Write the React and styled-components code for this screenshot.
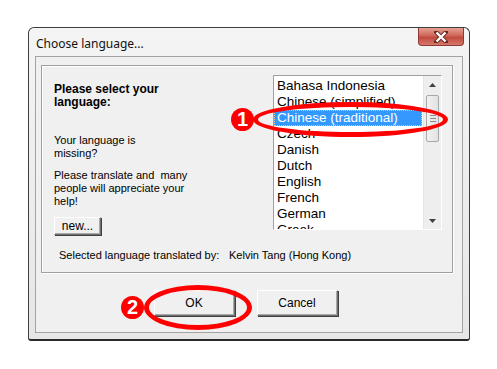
import React from 'react';
import styled, { createGlobalStyle } from 'styled-components';

const GlobalStyle = createGlobalStyle`
  html, body {
    margin: 0;
    padding: 0;
    background: #ffffff;
  }
  body {
    font-family: "Liberation Sans", Arial, sans-serif;
  }
`;

const Page = styled.div`
  width: 497px;
  height: 369px;
  padding: 27px 0 0 28px;
  box-sizing: border-box;
`;

const Window = styled.div`
  position: relative;
  width: 442px;
  height: 314px;
  box-sizing: border-box;
  border: 1px solid #3e3e3e;
  border-bottom: 2px solid #2a2a2a;
  border-radius: 6px 6px 3px 3px;
  background: linear-gradient(180deg, #f4f4f4 0%, #ececec 60%, #e6e6e6 100%);
  display: flex;
  flex-direction: column;
  padding: 0 6px 6px 6px;
`;

const TitleBar = styled.div`
  height: 28px;
  display: flex;
  align-items: flex-start;
  justify-content: space-between;
`;

const Title = styled.span`
  font-family: "Noto Sans", "Liberation Sans", sans-serif;
  font-size: 12px;
  color: #111;
  margin-top: 7px;
  padding-left: 1px;
`;

const CloseButton = styled.div`
  width: 46px;
  height: 18px;
  margin-right: -1px;
  box-sizing: border-box;
  border: 1px solid #8c3a32;
  border-top: none;
  border-radius: 0 0 4px 4px;
  background: linear-gradient(180deg, #e5a293 0%, #d0665a 45%, #c04a3e 55%, #d8786a 100%);
  display: flex;
  align-items: center;
  justify-content: center;
`;

const ClientArea = styled.div`
  flex: 1;
  border: 1px solid #a3a3a3;
  background: #f0f0f0;
  display: flex;
  flex-direction: column;
  padding: 8px 9px 0 5px;
`;

const GroupBox = styled.div`
  border: 1px solid #a0a0a0;
  box-shadow: inset 1px 1px 0 #ffffff, 1px 1px 0 #ffffff;
  padding: 9px 10px 10px 12px;
  display: flex;
  flex-direction: column;
`;

const TopRow = styled.div`
  display: flex;
  justify-content: space-between;
`;

const LeftColumn = styled.div`
  display: flex;
  flex-direction: column;
  padding-top: 8px;
  font-size: 11px;
  line-height: 13px;
  color: #000;
`;

const Heading = styled.div`
  font-weight: bold;
  font-size: 12px;
  line-height: 13px;
  margin-bottom: 25px;
`;

const Paragraph = styled.p`
  margin: 0 0 9px 0;
`;

const ClassicButton = styled.button`
  font-family: "Liberation Sans", Arial, sans-serif;
  font-size: 12px;
  color: #000;
  width: ${(p) => p.$width}px;
  height: ${(p) => p.$height}px;
  padding: 0;
  background: #f0f0f0;
  border: 1px solid;
  border-color: #ffffff #6f6f6f #6f6f6f #ffffff;
  box-shadow: inset -1px -1px 0 #a8a8a8, 1px 1px 0 #404040;
  cursor: default;
`;

const ListWrap = styled.div`
  width: 169px;
  height: 155px;
  box-sizing: border-box;
  border: 1px solid;
  border-color: #a0a0a0 #ffffff #ffffff #a0a0a0;
  background: #ffffff;
  display: flex;
`;

const ListItems = styled.div`
  flex: 1;
  overflow: hidden;
  padding: 2px 1px 0 0;
`;

const ListItem = styled.div`
  height: 16px;
  line-height: 16px;
  font-size: 13.5px;
  padding-left: 3px;
  white-space: nowrap;
  color: ${(p) => (p.$selected ? '#ffffff' : '#000')};
  background: ${(p) => (p.$selected ? '#3399ff' : 'transparent')};
  outline: ${(p) => (p.$selected ? '1px dotted #f5c27a' : 'none')};
  outline-offset: -1px;
`;

const ScrollBar = styled.div`
  width: 17px;
  background: #eeeeee;
  border-left: 1px solid #e4e4e4;
  display: flex;
  flex-direction: column;
  align-items: center;
`;

const Arrow = styled.div`
  width: 17px;
  height: 17px;
  display: flex;
  align-items: center;
  justify-content: center;
`;

const Track = styled.div`
  flex: 1;
  width: 100%;
  display: flex;
  flex-direction: column;
  align-items: center;
`;

const Thumb = styled.div`
  margin-top: 2px;
  width: 13px;
  height: 47px;
  box-sizing: border-box;
  border: 1px solid #a8a8a8;
  border-radius: 2px;
  background: linear-gradient(90deg, #f2f2f2, #e2e2e2);
  display: flex;
  flex-direction: column;
  align-items: center;
  justify-content: center;
  gap: 2px;
`;

const Grip = styled.div`
  width: 6px;
  height: 1px;
  background: #8a8a8a;
`;

const Footer = styled.div`
  display: flex;
  margin-top: 14px;
  padding-left: 5px;
  font-size: 11px;
  line-height: 13px;
  color: #000;
`;

const FooterLabel = styled.span`
  width: 170px;
`;

const ButtonRow = styled.div`
  display: flex;
  justify-content: center;
  gap: 22px;
  padding-top: 17px;
  padding-right: 3px;
`;

const Ellipse = styled.div`
  position: absolute;
  left: ${(p) => p.$x}px;
  top: ${(p) => p.$y}px;
  width: ${(p) => p.$w}px;
  height: ${(p) => p.$h}px;
  box-sizing: border-box;
  border: 5px solid #ff0000;
  border-radius: 50%;
  pointer-events: none;
`;

const Badge = styled.div`
  position: absolute;
  left: ${(p) => p.$x}px;
  top: ${(p) => p.$y}px;
  width: 23px;
  height: 23px;
  border-radius: 50%;
  background: #ff0000;
  color: #ffffff;
  font-family: "Liberation Sans", Arial, sans-serif;
  font-weight: bold;
  font-size: 20px;
  line-height: 23px;
  text-align: center;
`;

const languages = [
  'Bahasa Indonesia',
  'Chinese (simplified)',
  'Chinese (traditional)',
  'Czech',
  'Danish',
  'Dutch',
  'English',
  'French',
  'German',
  'Greek',
];

const CloseIcon = () => (
  <svg width="14" height="12" viewBox="0 0 14 12">
    <path d="M2 1 L12 11 M12 1 L2 11" stroke="#6a2a22" strokeWidth="4.2" strokeLinecap="square" />
    <path d="M2.5 1.5 L11.5 10.5 M11.5 1.5 L2.5 10.5" stroke="#ffffff" strokeWidth="2.4" />
  </svg>
);

const ArrowIcon = ({ down }) => (
  <svg width="7" height="4" viewBox="0 0 7 4">
    <path d={down ? 'M0 0 L7 0 L3.5 4 Z' : 'M0 4 L7 4 L3.5 0 Z'} fill="#404040" />
  </svg>
);

const App = () => {
  return (
    <Page>
      <GlobalStyle />
      <Window>
        <TitleBar>
          <Title>Choose language...</Title>
          <CloseButton>
            <CloseIcon />
          </CloseButton>
        </TitleBar>
        <ClientArea>
          <GroupBox>
            <TopRow>
              <LeftColumn>
                <Heading>
                  Please select your
                  <br />
                  language:
                </Heading>
                <Paragraph>
                  Your language is
                  <br />
                  missing?
                </Paragraph>
                <Paragraph>
                  Please translate and&nbsp; many
                  <br />
                  people will appreciate your
                  <br />
                  help!
                </Paragraph>
                <ClassicButton $width={47} $height={18}>new...</ClassicButton>
              </LeftColumn>
              <ListWrap>
                <ListItems>
                  {languages.map((lang) => (
                    <ListItem key={lang} $selected={lang === 'Chinese (traditional)'}>
                      {lang}
                    </ListItem>
                  ))}
                </ListItems>
                <ScrollBar>
                  <Arrow>
                    <ArrowIcon />
                  </Arrow>
                  <Track>
                    <Thumb>
                      <Grip />
                      <Grip />
                      <Grip />
                    </Thumb>
                  </Track>
                  <Arrow>
                    <ArrowIcon down />
                  </Arrow>
                </ScrollBar>
              </ListWrap>
            </TopRow>
            <Footer>
              <FooterLabel>Selected language translated by:</FooterLabel>
              <span>Kelvin Tang (Hong Kong)</span>
            </Footer>
          </GroupBox>
          <ButtonRow>
            <ClassicButton $width={81} $height={26}>OK</ClassicButton>
            <ClassicButton $width={81} $height={26}>Cancel</ClassicButton>
          </ButtonRow>
        </ClientArea>

        <Ellipse $x={224} $y={74} $w={195} $h={35} />
        <Badge $x={202} $y={80}>1</Badge>
        <Ellipse $x={115} $y={257} $w={108} $h={45} />
        <Badge $x={92} $y={268}>2</Badge>
      </Window>
    </Page>
  );
};

export default App;
